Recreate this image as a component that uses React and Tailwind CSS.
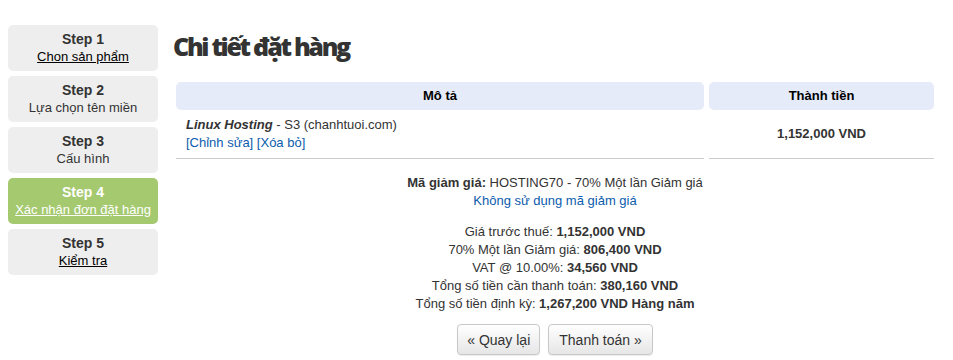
const steps = [
    { n: 1, label: 'Chon sản phẩm', link: true },
    { n: 2, label: 'Lựa chọn tên miền' },
    { n: 3, label: 'Cấu hình' },
    { n: 4, label: 'Xác nhận đơn đặt hàng', link: true, active: true },
    { n: 5, label: 'Kiểm tra', link: true },
];

const App = () => {
    return (
        <div className="flex pl-2 pr-[19px] pt-[25px] text-[13px] text-[#333] bg-white min-h-[360px]" style={{ fontFamily: '"Liberation Sans", Arial, sans-serif' }}>
            {/* Steps sidebar */}
            <div className="w-[150px] flex flex-col gap-[5px] shrink-0">
                {steps.map((s) => (
                    <div
                        key={s.n}
                        className={`h-[46px] rounded-[5px] flex flex-col items-center justify-center leading-[18px] ${s.active ? 'bg-[#a5c96f] text-white' : 'bg-[#eeeeee] text-[#333]'}`}
                    >
                        <div className="font-bold text-[14px]">Step {s.n}</div>
                        <div className={s.link ? `underline ${s.active ? 'text-white' : 'text-black'}` : ''}>{s.label}</div>
                    </div>
                ))}
            </div>

            {/* Main content */}
            <div className="flex-1 ml-[18px]">
                <h1 className="text-[25px] font-extrabold tracking-[-2.3px] text-[#333] leading-[34px] mt-[4px] -ml-[3px]" style={{ fontFamily: '"Open Sans", sans-serif' }}>
                    Chi tiết đặt hàng
                </h1>

                <div className="mt-[19px] flex gap-[5px]">
                    <div className="flex-1 flex flex-col">
                        <div className="h-[28px] rounded-[5px] bg-[#e5ebf8] flex items-center justify-center font-bold text-black">Mô tả</div>
                        <div className="pl-[10px] pt-[6px] pb-[6px] leading-[18px] border-b border-[#cccccc]">
                            <div><i className="font-bold">Linux Hosting</i> - S3 (chanhtuoi.com)</div>
                            <div className="text-[#0b5cad]">[Chỉnh sửa] [Xóa bỏ]</div>
                        </div>
                    </div>
                    <div className="w-[225px] flex flex-col">
                        <div className="h-[28px] rounded-[5px] bg-[#e5ebf8] flex items-center justify-center font-bold text-black">Thành tiền</div>
                        <div className="flex-1 flex items-center justify-center font-bold border-b border-[#cccccc]">1,152,000 VND</div>
                    </div>
                </div>

                <div className="mt-[15px] flex flex-col items-center leading-[18px]">
                    <div><b>Mã giảm giá:</b> HOSTING70 - 70% Một lần Giảm giá</div>
                    <div className="text-[#0b5cad]">Không sử dụng mã giảm giá</div>
                    <div className="mt-[13px]">Giá trước thuế: <b>1,152,000 VND</b></div>
                    <div>70% Một lần Giảm giá: <b>806,400 VND</b></div>
                    <div>VAT @ 10.00%: <b>34,560 VND</b></div>
                    <div>Tổng số tiền cần thanh toán: <b>380,160 VND</b></div>
                    <div>Tổng số tiền định kỳ: <b>1,267,200 VND Hàng năm</b></div>
                    <div className="mt-[11px] flex gap-[8px]">
                        <button className="h-[31px] px-[9px] rounded-[4px] border border-[#c8c8c8] bg-gradient-to-b from-white to-[#e6e6e6] text-[14px] text-[#333] shadow-[0_1px_1px_rgba(0,0,0,0.08)]">« Quay lại</button>
                        <button className="h-[31px] px-[10px] rounded-[4px] border border-[#c8c8c8] bg-gradient-to-b from-white to-[#e6e6e6] text-[14px] text-[#333] shadow-[0_1px_1px_rgba(0,0,0,0.08)]">Thanh toán »</button>
                    </div>
                </div>
            </div>
        </div>
    );
};

export default App;
